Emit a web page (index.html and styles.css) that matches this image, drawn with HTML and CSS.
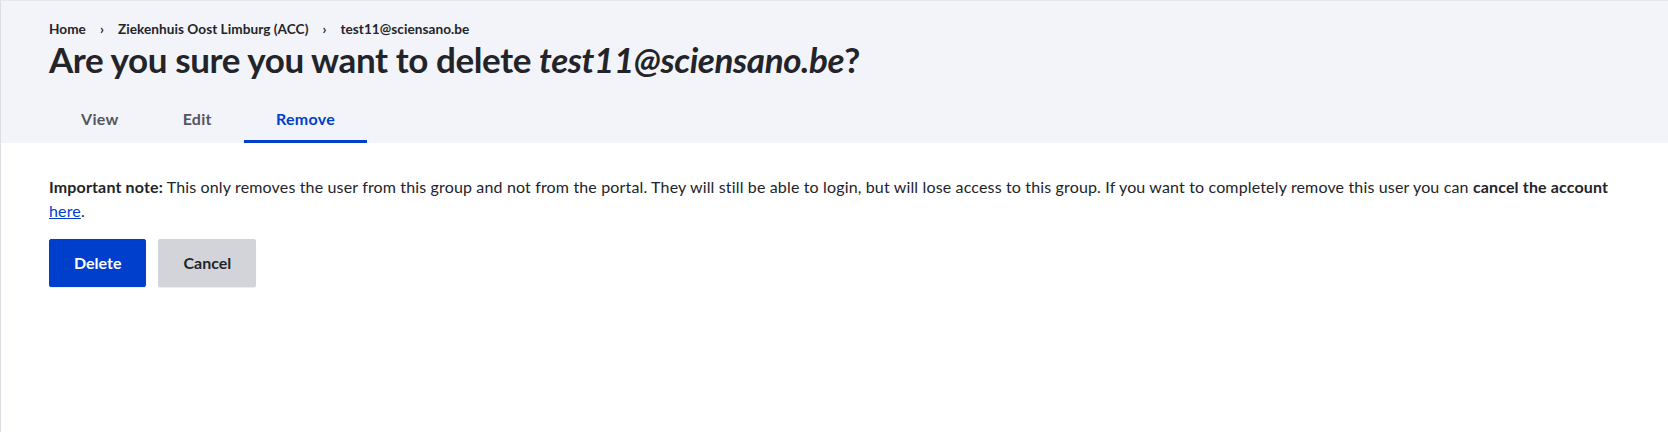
FILE: index.html
```html
<!DOCTYPE html>
<html lang="en">
<head>
<meta charset="utf-8">
<title>Remove member</title>
<link rel="stylesheet" href="styles.css">
</head>
<body>
<div class="page">
  <header class="page-header">
    <nav class="breadcrumb" aria-label="Breadcrumb">
      <ol class="breadcrumb__list">
        <li class="breadcrumb__item"><a class="breadcrumb__link" href="#">Home</a></li>
        <li class="breadcrumb__item"><a class="breadcrumb__link" href="#">Ziekenhuis Oost Limburg (ACC)</a></li>
        <li class="breadcrumb__item"><a class="breadcrumb__link" href="#">test11@sciensano.be</a></li>
      </ol>
    </nav>
    <h1 class="page-title">Are you sure you want to delete <em>test11@sciensano.be</em>?</h1>
    <nav class="tabs-wrapper">
      <ul class="tabs">
        <li class="tabs__tab"><a class="tabs__link" href="#">View</a></li>
        <li class="tabs__tab"><a class="tabs__link" href="#">Edit</a></li>
        <li class="tabs__tab is-active"><a class="tabs__link is-active" href="#">Remove</a></li>
      </ul>
    </nav>
  </header>
  <main class="page-content">
    <p class="note"><strong>Important note:</strong> This only removes the user from this group and not from the portal. They will still be able to login, but will lose access to this group. If you want to completely remove this user you can <strong>cancel the account</strong> <a class="link" href="#">here</a>.</p>
    <div class="form-actions">
      <button class="button button--primary" type="button">Delete</button>
      <button class="button button--secondary" type="button">Cancel</button>
    </div>
  </main>
</div>
</body>
</html>
```
FILE: styles.css
```css
html, body {
  margin: 0;
  padding: 0;
  background: #ffffff;
}

body {
  font-family: Lato, "Liberation Sans", sans-serif;
  color: #232429;
  font-size: 16px;
  line-height: 1.5;
}

.page {
  min-height: 432px;
  box-sizing: border-box;
  border-left: 1px solid #dcdde2;
  border-top: 1px solid #e6e7ec;
}

.page-header {
  background: #f3f4f9;
  padding: 18px 48px 0;
}

.breadcrumb__list {
  display: flex;
  list-style: none;
  margin: 0;
  padding: 0;
  font-size: 13.6px;
  line-height: 20px;
  letter-spacing: 0.05px;
  font-weight: 700;
}

.breadcrumb__item + .breadcrumb__item::before {
  content: "\203A";
  padding: 0 14px;
}

.breadcrumb__link {
  color: #232429;
  text-decoration: none;
}

.page-title {
  margin: 0;
  font-size: 35px;
  line-height: 41px;
  letter-spacing: -0.4px;
  font-weight: 700;
  color: #232429;
}

.page-title em {
  font-style: italic;
}

.tabs-wrapper {
  margin-top: 15px;
}

.tabs {
  display: flex;
  list-style: none;
  margin: 0;
  padding: 0;
}

.tabs__link {
  display: flex;
  align-items: center;
  height: 48px;
  box-sizing: border-box;
  padding: 3px 32px 0;
  font-size: 16px;
  letter-spacing: 0.3px;
  font-weight: 700;
  color: #545560;
  text-decoration: none;
  border-bottom: 3px solid transparent;
}

.tabs__link.is-active {
  color: #003ecc;
  border-bottom-color: #003ecc;
}

.page-content {
  padding: 32px 48px 0;
}

.note {
  margin: 0;
  font-size: 16px;
  line-height: 24px;
  letter-spacing: 0.15px;
}

.note strong {
  font-weight: 700;
}

.link {
  color: #003ecc;
  text-decoration: underline;
}

.form-actions {
  display: flex;
  gap: 12px;
  margin-top: 16px;
}

.button {
  font-family: inherit;
  font-size: 16px;
  line-height: 16px;
  font-weight: 700;
  padding: 15px 24px;
  border: 1px solid transparent;
  border-radius: 2px;
  box-shadow: 0 1px 1px rgba(0, 0, 0, 0.08);
  cursor: pointer;
}

.button--primary {
  background: #003ecc;
  border-color: #003ecc;
  color: #ffffff;
}

.button--secondary {
  background: #d3d4d9;
  border-color: #d3d4d9;
  color: #232429;
}
```
